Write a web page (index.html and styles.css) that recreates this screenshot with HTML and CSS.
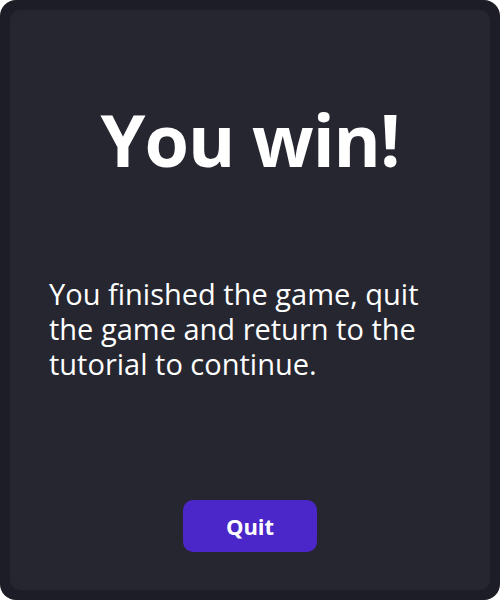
FILE: index.html
```html
<!DOCTYPE html>
<html>
<head>
<meta charset="utf-8">
<link rel="stylesheet" href="styles.css">
</head>
<body>
<div class="frame">
  <div class="panel">
    <h1 class="title">You win!</h1>
    <p class="message">You finished the game, quit the game and return to the tutorial to continue.</p>
    <div class="actions">
      <button class="quit">Quit</button>
    </div>
  </div>
</div>
</body>
</html>
```

FILE: styles.css
```css
html, body {
  margin: 0;
  padding: 0;
  background: #ffffff;
}
.frame {
  box-sizing: border-box;
  width: 500px;
  height: 600px;
  padding: 10px;
  border-radius: 16px;
  background: #1c1d26;
}
.panel {
  box-sizing: border-box;
  height: 100%;
  border-radius: 10px;
  background: #252630;
  display: flex;
  flex-direction: column;
  padding: 0 39px;
  font-family: "Open Sans", sans-serif;
  color: #ffffff;
}
.title {
  margin: 81px 0 0;
  text-align: center;
  font-size: 72px;
  font-weight: 700;
  line-height: 96px;
  letter-spacing: -1px;
}
.message {
  margin: 89px 0 0;
  font-size: 29px;
  line-height: 35px;
  font-weight: 400;
}
.actions {
  margin-top: auto;
  margin-bottom: 38px;
  display: flex;
  justify-content: center;
}
.quit {
  width: 134px;
  height: 52px;
  border: none;
  border-radius: 10px;
  background: #4b26c8;
  color: #ffffff;
  font-family: "Open Sans", sans-serif;
  font-size: 22px;
  font-weight: 700;
}
```
